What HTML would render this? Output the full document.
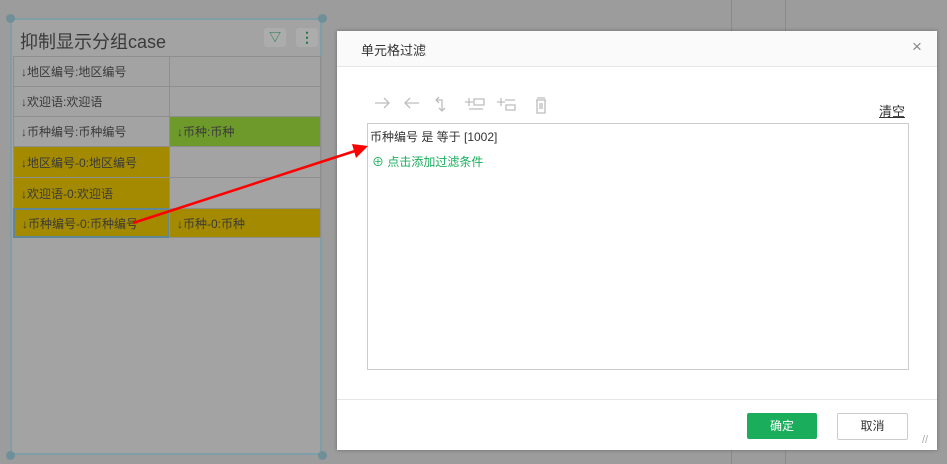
<!DOCTYPE html><html><head><style>
body{margin:0;width:947px;height:464px;background:#9c9c9c;position:relative;overflow:hidden;font-family:"Liberation Sans","Noto Sans CJK SC",sans-serif;}
.a{position:absolute}
.cell{position:absolute;box-sizing:border-box;border:1px solid #8e8e8e;font-size:12px;color:#3a3a3a;padding-left:7px;display:flex;align-items:center}
</style></head><body>
<div class="a" style="left:731px;top:0;width:1px;height:464px;background:#8a8a8a"></div>
<div class="a" style="left:785px;top:0;width:1px;height:464px;background:#8a8a8a"></div>
<div class="a" style="left:10px;top:18px;width:312px;height:437px;border:2px solid #7f9ea8;box-sizing:border-box;background:#a3a3a3"></div>
<div class="a" style="left:6px;top:14px;width:9px;height:9px;border-radius:50%;background:#6f8f99"></div>
<div class="a" style="left:318px;top:14px;width:9px;height:9px;border-radius:50%;background:#6f8f99"></div>
<div class="a" style="left:6px;top:451px;width:9px;height:9px;border-radius:50%;background:#6f8f99"></div>
<div class="a" style="left:318px;top:451px;width:9px;height:9px;border-radius:50%;background:#6f8f99"></div>
<div class="a" style="left:20px;top:28px;font-size:18px;color:#3a3a3a">抑制显示分组case</div>
<div class="a" style="left:264px;top:28px;width:22px;height:19px;background:#acacac;border-radius:3px;color:#1c7a44;font-size:12px;text-align:center;line-height:19px">▽</div>
<div class="a" style="left:296px;top:28px;width:22px;height:19px;background:#acacac;border-radius:3px;color:#1c7a44;font-size:14px;font-weight:bold;text-align:center;line-height:19px">⋮</div>
<div class="cell" style="left:13px;top:56px;width:157px;height:31px">↓地区编号:地区编号</div>
<div class="cell" style="left:169px;top:56px;width:152px;height:31px"></div>
<div class="cell" style="left:13px;top:86px;width:157px;height:31px">↓欢迎语:欢迎语</div>
<div class="cell" style="left:169px;top:86px;width:152px;height:31px"></div>
<div class="cell" style="left:13px;top:116px;width:157px;height:31px">↓币种编号:币种编号</div>
<div class="cell" style="left:169px;top:116px;width:152px;height:31px;background:#6d9a2a">↓币种:币种</div>
<div class="cell" style="left:13px;top:146px;width:157px;height:32px;background:#a38a00">↓地区编号-0:地区编号</div>
<div class="cell" style="left:169px;top:146px;width:152px;height:32px"></div>
<div class="cell" style="left:13px;top:177px;width:157px;height:32px;background:#a38a00">↓欢迎语-0:欢迎语</div>
<div class="cell" style="left:169px;top:177px;width:152px;height:32px"></div>
<div class="cell" style="left:13px;top:208px;width:157px;height:30px;background:#a38a00;border:2px solid #5f8796">↓币种编号-0:币种编号</div>
<div class="cell" style="left:169px;top:208px;width:152px;height:30px;background:#a38a00">↓币种-0:币种</div>
<div class="a" style="left:337px;top:31px;width:600px;height:419px;background:#fff;box-shadow:0 0 4px rgba(0,0,0,.3)">
<div class="a" style="left:0;top:0;width:600px;height:35px;background:#fafafa;border-bottom:1px solid #e6e6e6"></div>
<div class="a" style="left:24px;top:9px;font-size:13px;color:#333">单元格过滤</div>
<div class="a" style="left:575px;top:6px;font-size:17px;color:#888">×</div>
<svg class="a" style="left:36px;top:62px" width="180" height="22" fill="none" stroke="#bdbdbd" stroke-width="1.3">
<path d="M2 10h14M11 5l5 5-5 5"/><path d="M32 10h14M37 5l-5 5 5 5"/>
<path d="M66 4l-3 3 3 3M63 7h6v11M66 15l3 3 3-3"/>
<path d="M96 5v8M92 9h8M101 6h10v6h-10zM96 16h14"/>
<path d="M128 5v8M124 9h8M132 7h10M133 12h9v5h-9z"/>
<path d="M164 5h8M163 7h10M164 7v13h8V7M167 10v6M169 10v6"/>
</svg>
<div class="a" style="left:542px;top:70px;font-size:13px;color:#333;text-decoration:underline">清空</div>
<div class="a" style="left:30px;top:92px;width:540px;height:245px;border:1px solid #ccc"></div>
<div class="a" style="left:33px;top:97px;font-size:12px;color:#333">币种编号 是 等于 [1002]</div>
<div class="a" style="left:35px;top:122px;font-size:12px;color:#1aae5c">⊕ 点击添加过滤条件</div>
<div class="a" style="left:0;top:368px;width:600px;height:1px;background:#e6e6e6"></div>
<div class="a" style="left:410px;top:382px;width:70px;height:26px;background:#1aae5c;border-radius:2px;color:#fff;font-size:12px;text-align:center;line-height:26px">确定</div>
<div class="a" style="left:500px;top:382px;width:69px;height:25px;border:1px solid #ccc;border-radius:2px;color:#333;font-size:12px;text-align:center;line-height:25px">取消</div>
<div class="a" style="left:585px;top:403px;font-size:11px;color:#aaa">//</div>
</div>
<svg class="a" style="left:0;top:0" width="947" height="464"><line x1="133" y1="223" x2="358" y2="150" stroke="#f00" stroke-width="2.5"/><polygon points="368,146 352,144 356,158" fill="#f00"/></svg>
</body></html>
